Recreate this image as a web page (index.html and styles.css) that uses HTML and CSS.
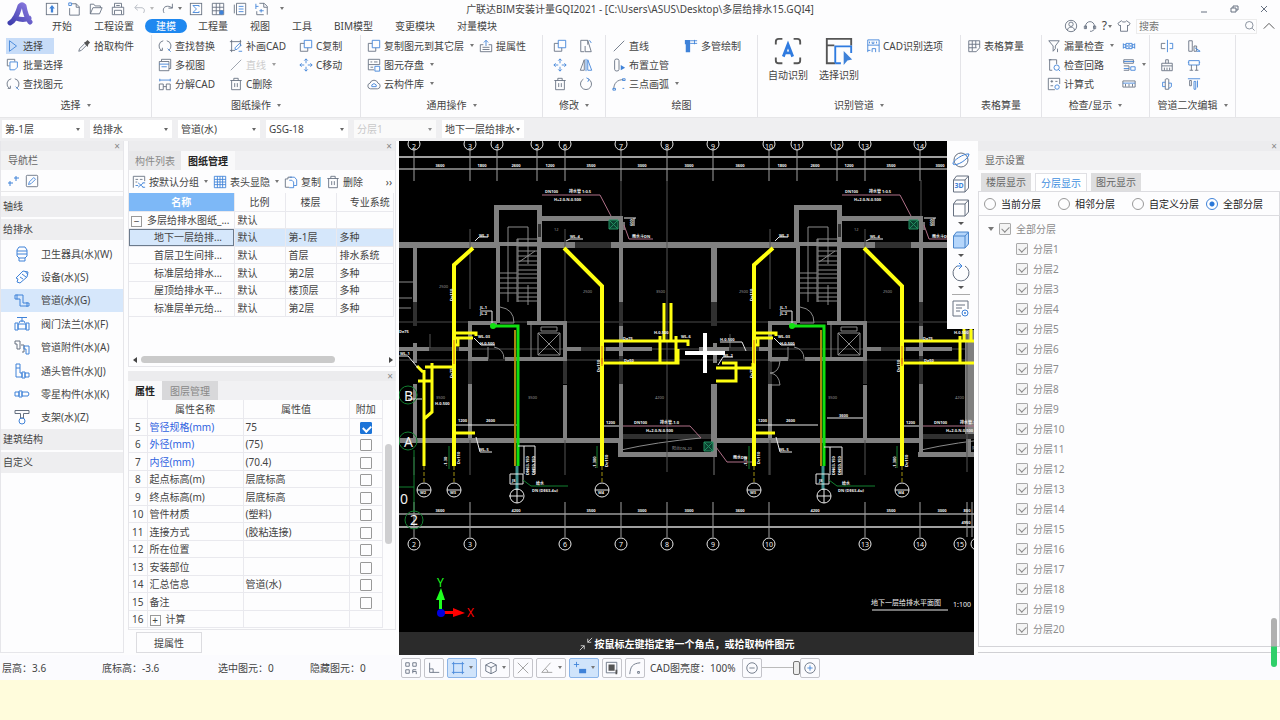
FILE: index.html
```
<!DOCTYPE html>
<html lang="zh-CN">
<head>
    <meta charset="UTF-8">
    <meta name="viewport" content="width=device-width, initial-scale=1.0">
    <title>广联达BIM安装计量GQI2021</title>
    <link rel="stylesheet" href="styles.css">
</head>
<body>
    <!-- 图标库 -->
    <svg class="defs" width="0" height="0" aria-hidden="true">
        <symbol id="i-up" viewBox="0 0 16 16"><rect x="1.5" y="1.5" width="13" height="13"/><path class="bf" d="M8 3.5l3.2 3.8H9.3V12H6.7V7.3H4.8z"/></symbol>
        <symbol id="i-new" viewBox="0 0 16 16"><path d="M5 2h5.500L14 5.500V15H3V7M10.500 2v4H14"/><path class="b" d="M2 1h3v3H2z"/></symbol>
        <symbol id="i-open" viewBox="0 0 16 16"><path d="M1.500 13.500v-11h4l1.500 2h6v2M1.500 13.500l3-7h10.500l-3 7z"/></symbol>
        <symbol id="i-save" viewBox="0 0 16 16"><path d="M4 6V1.500h8V6M1.500 6h13v8.500h-13zM4 14V9.500h8V14M6 4h4"/></symbol>
        <symbol id="i-undo" viewBox="0 0 16 16"><path d="M5 3L2 6.500l3.500 3M2.500 6.500H9c4 0 5 3 3 6"/></symbol>
        <symbol id="i-redo" viewBox="0 0 16 16"><path d="M3.500 12.500C1 8 4 4 9 5l4 1.500M13 2v5H8.500"/></symbol>
        <symbol id="i-sum" viewBox="0 0 16 16"><rect x="1.500" y="1.500" width="13" height="13"/><path class="b" d="M11.500 5.500V4h-7l4 4-4 4h7v-1.500"/></symbol>
        <symbol id="i-table" viewBox="0 0 16 16"><path d="M1.500 1.500h13v13h-13zM1.500 6h13M1.500 10h13M6 1.500v13M10 1.500v13"/><circle class="bf" cx="12" cy="12" r="2.500"/></symbol>
        <symbol id="i-list" viewBox="0 0 16 16"><path d="M4 1.500h10.500v13H4zM1.500 3v10"/><path class="b" d="M6.500 5h5.500M6.500 8h5.500M6.500 11h5.500"/></symbol>
        <symbol id="i-export" viewBox="0 0 16 16"><path d="M5 1.500h5.500L14 5v9.500M2 10.500v4h8M10 1.500V6h4"/><path class="b" d="M1 2v6M4 5H1M7 8v4M5 10h5"/></symbol>
        <symbol id="i-cursor" viewBox="0 0 16 16"><path class="b" d="M4 2v12l8-6z"/></symbol>
        <symbol id="i-pick" viewBox="0 0 16 16"><path d="M2 14l1-3 6-6 2 2-6 6z"/><path class="df" d="M8 4l2-1 2-2 3 3-2 2-1 3z"/></symbol>
        <symbol id="i-multi" viewBox="0 0 16 16"><path d="M4 9H1.500V1.500H10V4"/><path class="b" d="M4.500 4.500h8.500v6l-3 3H4.500z"/></symbol>
        <symbol id="i-find" viewBox="0 0 16 16"><path d="M6 2A6 6 0 0 0 4 13M10 2a6 6 0 0 1 2 11M2 13h3v-3"/><path class="b" d="M11 11l3.500 3.500"/></symbol>
        <symbol id="i-views" viewBox="0 0 16 16"><path d="M4 3.500V1.500h10.500V12h-2M1.500 4h11v10.500h-11z"/><path class="b" d="M1.500 7h11M4 10h6"/></symbol>
        <symbol id="i-split" viewBox="0 0 16 16"><path d="M1.500 8v6.500H6V8zM9.500 8v6.500H14V8zM6 11h3.500"/><path class="b" d="M2 2v3M14 2v3M2 3.500h12"/></symbol>
        <symbol id="i-draw" viewBox="0 0 16 16"><path d="M3 1v14M1 3h13M13 1v7M1 13h6"/><path class="b" d="M7 10l5-5 2 2-5 5H7zM11 14h4"/></symbol>
        <symbol id="i-line" viewBox="0 0 16 16"><path d="M2 14L14 2"/></symbol>
        <symbol id="i-trash" viewBox="0 0 16 16"><path d="M1.500 4h13M5.500 4V1.500h5V4M3 4v10.500h10V4M6.500 7v4.500M9.500 7v4.500"/></symbol>
        <symbol id="i-copy" viewBox="0 0 16 16"><path d="M6 5H1.500v9H10v-4"/><path class="b" d="M6 1.500h8.500V10H6z"/></symbol>
        <symbol id="i-move" viewBox="0 0 16 16"><path class="b" d="M8 1v5M8 10v5M1 8h5M10 8h5M6 3l2-2 2 2M6 13l2 2 2-2M3 6L1 8l2 2M13 6l2 2-2 2"/></symbol>
        <symbol id="i-disk" viewBox="0 0 16 16"><path d="M1.500 1.500h13v6h-13zM1.500 7.500v6H8M4 4.500h2M8 4.500h4M4 10.500h3"/><path class="b" d="M9 9.500h5.500V15H9z"/></symbol>
        <symbol id="i-cloud" viewBox="0 0 16 16"><path d="M4 13.500a3.300 3.300 0 0 1-.5-6.500A4.700 4.700 0 0 1 12.500 7a3.300 3.300 0 0 1-.5 6.500z"/><path class="b" d="M5.500 11V9l2.500-1.500L10.500 9v2z"/></symbol>
        <symbol id="i-prop" viewBox="0 0 16 16"><path d="M5 6.500H1.500v8h13v-8H11M4 9.500h8M4 12h8"/><path class="b" d="M8 8V1.500M5.500 4L8 1.500 10.500 4"/></symbol>
        <symbol id="i-stretch" viewBox="0 0 16 16"><path d="M6 14.500H2v-13h8v5M7 8v6.500h7L10 1.500"/><path class="b" d="M12 1.500l2 3"/></symbol>
        <symbol id="i-mirror" viewBox="0 0 16 16"><path d="M6 2v12H1.500z"/><path class="b" d="M10 2v12h4.500zM8 1v14"/></symbol>
        <symbol id="i-rotate" viewBox="0 0 16 16"><path d="M11 2.500A6.300 6.300 0 1 1 5 2.500"/><path class="b" d="M8.500 1l3 1.500-1.500 3"/></symbol>
        <symbol id="i-riser" viewBox="0 0 16 16"><path d="M3 3v10a2 1.500 0 0 0 5 0V3a2 1.500 0 0 0-5 0z"/><path class="bf" d="M10 8l5 3-5 3z"/></symbol>
        <symbol id="i-arc" viewBox="0 0 16 16"><path d="M2 14C2 7 6 3 13 3"/><path class="b" d="M1 13h3v2H1zM12 2h3v2h-3zM12 13h2"/></symbol>
        <symbol id="i-pipes" viewBox="0 0 16 16"><path class="bf" d="M1 1h6v14H2V6H1z"/><path class="b" d="M7 2h8M7 5h8M12 1v5"/></symbol>
        <symbol id="i-auto" viewBox="0 0 32 32"><path class="thick" d="M3 9V6q0-3 3-3h4M22 3h4q3 0 3 3v3M29 23v3q0 3-3 3h-4M10 29H6q-3 0-3-3v-3"/><path class="bthick" d="M11 22l5-13 5 13M13 18h6"/></symbol>
        <symbol id="i-choose" viewBox="0 0 32 32"><path class="thick" d="M12 29H3V3h26v7M3 10h8"/><path class="bline" d="M12 29V11h17v7M12 29h6"/><path class="bf" d="M21 16l9 9-5 1-4 5z"/></symbol>
        <symbol id="i-cad" viewBox="0 0 16 16"><path class="b" d="M2 15V1h13v14M2 7h13M4 3v2M7 3v2h2V3M12 3v2M7 15v-4h4v4M2 13h3"/></symbol>
        <symbol id="i-sheet" viewBox="0 0 16 16"><path d="M2 2h12.500v8l-4 4.500H2zM2 6h12.500M2 10h9M6 2v12M10 2v8"/></symbol>
        <symbol id="i-funnel" viewBox="0 0 16 16"><path d="M2 2h12L9.500 8v3L7 14V8zM12 11v4"/></symbol>
        <symbol id="i-loop" viewBox="0 0 16 16"><path d="M6 14H3V2h8v5M2 2h3"/><circle class="b" cx="11" cy="11" r="3"/><path class="b" d="M13 13l2 2"/></symbol>
        <symbol id="i-calc" viewBox="0 0 16 16"><path d="M9 14.500H1.500v-13h13V8M4 5h3M5.500 3.500v3M9.500 5H12M4 10h3"/><circle class="b" cx="11.500" cy="11.500" r="2.500"/></symbol>
        <symbol id="i-joint" viewBox="0 0 16 16"><path class="b" d="M1.500 5v6M14.500 5v6M1.500 6.500h3v3h-3M14.500 6.500h-3v3h3M4.500 5h7v6h-7z"/><circle class="b" cx="8" cy="8" r="1.500"/></symbol>
        <symbol id="i-layers" viewBox="0 0 16 16"><path d="M2 2h11v4H2zM2 9h6v5H2"/><path class="b" d="M2 4h12M10 10h5v4h-5zM2 12h6"/></symbol>
        <symbol id="i-ruler" viewBox="0 0 16 16"><path d="M1 4.500h14v7H1zM4 8v3M8 8v3M12 8v3"/><path class="b" d="M1 7h14"/></symbol>
        <symbol id="i-break" viewBox="0 0 16 16"><path d="M6 5H1.500v6H6"/><path class="b" d="M8.500 1v14M11 5h3.500v6H11"/></symbol>
        <symbol id="i-brush" viewBox="0 0 16 16"><path d="M6.500 6V2h3v4M2 9h12V6H2zM2 9v5.500h12V9M5 11v3M8 11v3M11 11v3"/></symbol>
        <symbol id="i-tee" viewBox="0 0 16 16"><path d="M6 3v11h4V3a2 1 0 0 0-4 0z"/><path class="b" d="M6 6H3v5h3M10 7h3v4l-3 2"/></symbol>
        <symbol id="i-elbow" viewBox="0 0 16 16"><path d="M2 2h4v12H2zM8 8h3v6H8z"/><path class="b" d="M9 10l6 4M11 14h4"/></symbol>
        <symbol id="i-cross" viewBox="0 0 16 16"><path class="b" d="M2 3h12v5H2zM1 5h1M14 5h1"/><path d="M5 8v6M11 8v6M3 14h4M9 14h4"/></symbol>
        <symbol id="i-align" viewBox="0 0 16 16"><path class="b" d="M1 2h14M8 5h2v9H8zM12 4v8"/><path d="M3 4h2v6H3z"/></symbol>
        <symbol id="i-user" viewBox="0 0 16 16"><circle cx="8" cy="8" r="6.500"/><circle cx="8" cy="6" r="2.500"/><path d="M4 13c0-5 8-5 8 0"/></symbol>
        <symbol id="i-head" viewBox="0 0 16 16"><path d="M3 11V8a5 5 0 0 1 10 0v3M1.500 8v3H4V8zM14.500 8v3H12V8zM13 12l-3 2H8"/></symbol>
        <symbol id="i-shirt" viewBox="0 0 16 16"><path d="M5 2l-4 3 2 3 1-1v7h8V7l1 1 2-3-4-3c-1 2-5 2-6 0z"/></symbol>
        <symbol id="i-search" viewBox="0 0 16 16"><circle cx="7" cy="7" r="5"/><path d="M11 11l3 3"/></symbol>
        <symbol id="i-basin" viewBox="0 0 16 16"><path class="b" d="M5 1h6l2 3v6l-2 2v3H5v-3l-2-2V4zM3 5h10M3 8h10M5 12h6"/></symbol>
        <symbol id="i-equip" viewBox="0 0 16 16"><path class="b" d="M2 9l7-7 5 1-1 5-7 6-3-1 1-3zM6 8l3 2M8 5l4 3M11 2l3 4"/></symbol>
        <symbol id="i-pipe" viewBox="0 0 16 16"><path class="b" d="M1 3v4h5v7h9v-3H9V3zM3 2.500v5M13 10v5"/></symbol>
        <symbol id="i-valve" viewBox="0 0 16 16"><path class="b" d="M3 1.500h10M8 1.500V6M5 7l1-2h4l1 2M1 7h3v7H1zM12 7h3v7h-3zM4 8h8v5H4z"/></symbol>
        <symbol id="i-fit" viewBox="0 0 16 16"><path d="M1 2h5v8H3V5H1zM7 6h3v7H8"/><path class="b" d="M10 7h5v8h-3v-5h-2z"/></symbol>
        <symbol id="i-conn" viewBox="0 0 16 16"><path class="b" d="M2 1h4v4H2zM2 5v9h6v-4H6V5M8 9h3v6H8zM11 10h4v4h-4z"/></symbol>
        <symbol id="i-part" viewBox="0 0 16 16"><path class="b" d="M1 6h4v4H1zM5 5h3v6H5zM8 6h6q2 2 0 4H8z"/></symbol>
        <symbol id="i-support" viewBox="0 0 16 16"><path d="M1 1.500h14v3H9.500V9h-3V4.500H1z"/><circle class="b" cx="8" cy="12" r="3"/></symbol>
        <symbol id="i-group" viewBox="0 0 16 16"><path d="M1.500 14.500v-13h13V7M4 5h3M9 5h3M4 8h2"/><path class="b" d="M7 9l6 5M13 9l-6 5M4 12h3M12 9h3M12 14h3"/></symbol>
        <symbol id="i-grid" viewBox="0 0 16 16"><path class="b" d="M1.500 1.500h13v13h-13zM1.500 5h13M1.500 8h13M1.500 11h13M5 1.500v13M8 1.500v13M11 1.500v13"/></symbol>
        <symbol id="i-paste" viewBox="0 0 16 16"><path d="M6 14H1.500V4.500h3M4.500 4.500v-2H9"/><path class="b" d="M6.500 2.500H12l2.500 3V12h-3M6 6h3l2 2v6.500H6"/></symbol>
        <symbol id="i-orbit" viewBox="0 0 20 20"><circle cx="10" cy="10" r="7"/><path class="b" d="M2 14C5 17 18 9 18 4M2 14C1 11 13 3 18 4"/></symbol>
        <symbol id="i-cube" viewBox="0 0 20 20"><path d="M2.500 6h11.500v12H2.500zM2.500 6l3-4h12v12l-3.500 4M14 6l3.500-4"/></symbol>
        <symbol id="i-cubef" viewBox="0 0 20 20"><path class="fillb" d="M2.500 6h11.500v12H2.500zM2.500 6l3-4h12v12l-3.500 4M14 6l3.500-4"/></symbol>
        <symbol id="i-turn" viewBox="0 0 20 20"><path d="M14 4A8 8 0 1 1 6 4"/><path class="b" d="M6 4h4M8 1l3 3-3 3"/></symbol>
        <symbol id="i-note" viewBox="0 0 20 20"><path d="M10 17H2V2h15v8M5 6h9M5 9h6M5 12h4"/><circle class="b" cx="14" cy="14" r="3"/><circle class="bf" cx="14" cy="14" r="1"/></symbol>
        <symbol id="i-quad" viewBox="0 0 16 16"><path d="M2 2h4v4H2zM10 2h4v4h-4zM2 10h4v4H2zM14 10h-4v4M10 12h4v3"/></symbol>
        <symbol id="i-ortho" viewBox="0 0 16 16"><path d="M3 2v11h11M3 9h4v4"/></symbol>
        <symbol id="i-box" viewBox="0 0 16 16"><path class="b" d="M3 3h10v10H3zM1 3h2V1M13 1v2h2M1 13h2v2M13 15v-2h2"/></symbol>
        <symbol id="i-hex" viewBox="0 0 16 16"><path d="M8 1.500l6 3v7l-6 3-6-3v-7zM2 4.500l6 3 6-3M8 7.500v7"/></symbol>
        <symbol id="i-x" viewBox="0 0 16 16"><path d="M2 2l12 12M14 2L2 14"/></symbol>
        <symbol id="i-angle" viewBox="0 0 16 16"><path d="M12 2L2 13h12M6 9q3 1 3 4"/></symbol>
        <symbol id="i-plus" viewBox="0 0 16 16"><path class="b" d="M4 1v6M1 4h6"/><path class="bf" d="M7 9h8v5H7z"/></symbol>
        <symbol id="i-snap" viewBox="0 0 16 16"><path d="M1.500 1.500h12v12h-12z"/><path class="df" d="M4 4h7v7H4zM12 10v5h2v-5z"/></symbol>
        <symbol id="i-curve" viewBox="0 0 16 16"><path d="M2 15C3 6 5 3 14 2M11 12h2v2h-2z"/></symbol>
        <symbol id="i-minus-c" viewBox="0 0 16 16"><circle cx="8" cy="8" r="6"/><path d="M5 8h6"/></symbol>
        <symbol id="i-plus-c" viewBox="0 0 16 16"><circle cx="8" cy="8" r="6"/><path class="b" d="M5 8h6M8 5v6"/></symbol>
        <symbol id="i-in" viewBox="0 0 16 16"><path d="M15 1L10 6M10 2v4h4M1 15l5-5M2 10h4v4"/></symbol>
    </svg>

    <header>
        <svg class="logo" viewBox="0 0 28 26" role="img" aria-label="logo">
            <defs><linearGradient id="lg" x1="0" y1="1" x2="1" y2="0"><stop offset="0" stop-color="#3f3fae"/><stop offset="1" stop-color="#8c7be0"/></linearGradient></defs>
            <path fill="none" stroke="url(#lg)" stroke-width="5" stroke-linecap="round" stroke-linejoin="round" d="M3 21C7 19 11 11 13 4q2-2 4 0c1 6 3 12 6 16M9 16c5 2 9 2 13 0"/>
        </svg>
        <div class="titlebar">
            <div class="quick">
                <button aria-label="上传"><svg class="ic"><use href="#i-up"/></svg></button>
                <button aria-label="新建"><svg class="ic"><use href="#i-new"/></svg></button>
                <button aria-label="打开"><svg class="ic"><use href="#i-open"/></svg></button>
                <button aria-label="保存"><svg class="ic"><use href="#i-save"/></svg></button>
                <button aria-label="撤销" class="caret off"><svg class="ic"><use href="#i-undo"/></svg></button>
                <button aria-label="恢复" class="caret"><svg class="ic"><use href="#i-redo"/></svg></button>
                <button aria-label="汇总"><svg class="ic"><use href="#i-sum"/></svg></button>
                <button aria-label="报表"><svg class="ic"><use href="#i-table"/></svg></button>
                <button aria-label="清单"><svg class="ic"><use href="#i-list"/></svg></button>
                <button aria-label="导出"><svg class="ic"><use href="#i-export"/></svg></button>
                <button aria-label="更多" class="caret"></button>
            </div>
            <h1>广联达BIM安装计量GQI2021 - [C:\Users\ASUS\Desktop\多层给排水15.GQI4]</h1>
            <div class="winbtns">
                <button aria-label="最小化"><svg viewBox="0 0 10 10"><path d="M2 8h6"/></svg></button>
                <button aria-label="还原"><svg viewBox="0 0 10 10"><path d="M2 4h5v4H2zM4 4V2h5v4H7"/></svg></button>
                <button aria-label="关闭"><svg viewBox="0 0 10 10"><path d="M2 2l6 6M8 2L2 8"/></svg></button>
            </div>
        </div>
        <div class="menubar">
            <nav>
                <a href="#">开始</a>
                <a href="#">工程设置</a>
                <a href="#" class="selected">建模</a>
                <a href="#">工程量</a>
                <a href="#">视图</a>
                <a href="#">工具</a>
                <a href="#">BIM模型</a>
                <a href="#">变更模块</a>
                <a href="#">对量模块</a>
            </nav>
            <div class="tools">
                <button aria-label="用户"><svg class="ic"><use href="#i-user"/></svg></button>
                <button aria-label="客服"><svg class="ic"><use href="#i-head"/></svg></button>
                <button class="caret help" aria-label="帮助">?</button>
                <button aria-label="皮肤"><svg class="ic"><use href="#i-shirt"/></svg></button>
                <div class="search">
                    <input type="text" placeholder="搜索" aria-label="搜索">
                    <svg class="ic"><use href="#i-search"/></svg>
                </div>
                <button aria-label="收起"><svg class="ic fold-up" viewBox="0 0 16 16"><path d="M2 11l6-6 6 6"/></svg></button>
            </div>
        </div>
    </header>

    <!-- 功能区 -->
    <div class="ribbon">
        <section class="g1">
            <div class="cmds">
                <button class="selected"><svg class="ic"><use href="#i-cursor"/></svg>选择</button>
                <button><svg class="ic"><use href="#i-pick"/></svg>拾取构件</button>
                <button><svg class="ic"><use href="#i-multi"/></svg>批量选择</button>
                <button class="row3"><svg class="ic"><use href="#i-find"/></svg>查找图元</button>
            </div>
            <h2 class="caret">选择</h2>
        </section>
        <section class="g2">
            <div class="cmds">
                <button><svg class="ic"><use href="#i-find"/></svg>查找替换</button>
                <button><svg class="ic"><use href="#i-draw"/></svg>补画CAD</button>
                <button><svg class="ic"><use href="#i-copy"/></svg>C复制</button>
                <button><svg class="ic"><use href="#i-views"/></svg>多视图</button>
                <button class="caret off"><svg class="ic"><use href="#i-line"/></svg>直线</button>
                <button><svg class="ic"><use href="#i-move"/></svg>C移动</button>
                <button><svg class="ic"><use href="#i-split"/></svg>分解CAD</button>
                <button><svg class="ic"><use href="#i-trash"/></svg>C删除</button>
            </div>
            <h2 class="caret">图纸操作</h2>
        </section>
        <section class="g3">
            <div class="cmds">
                <button class="caret"><svg class="ic"><use href="#i-copy"/></svg>复制图元到其它层</button>
                <button><svg class="ic"><use href="#i-prop"/></svg>提属性</button>
                <button class="caret"><svg class="ic"><use href="#i-disk"/></svg>图元存盘</button>
                <button class="caret row3"><svg class="ic"><use href="#i-cloud"/></svg>云构件库</button>
            </div>
            <h2 class="caret">通用操作</h2>
        </section>
        <section class="g4">
            <div class="cmds">
                <button aria-label="复制"><svg class="ic"><use href="#i-copy"/></svg></button>
                <button aria-label="拉伸"><svg class="ic"><use href="#i-stretch"/></svg></button>
                <button aria-label="移动"><svg class="ic"><use href="#i-move"/></svg></button>
                <button aria-label="镜像"><svg class="ic"><use href="#i-mirror"/></svg></button>
                <button aria-label="删除"><svg class="ic"><use href="#i-trash"/></svg></button>
                <button aria-label="旋转"><svg class="ic"><use href="#i-rotate"/></svg></button>
            </div>
            <h2 class="caret">修改</h2>
        </section>
        <section class="g5">
            <div class="cmds">
                <button><svg class="ic"><use href="#i-line"/></svg>直线</button>
                <button><svg class="ic"><use href="#i-pipes"/></svg>多管绘制</button>
                <button><svg class="ic"><use href="#i-riser"/></svg>布置立管</button>
                <button class="caret row3"><svg class="ic"><use href="#i-arc"/></svg>三点画弧</button>
            </div>
            <h2>绘图</h2>
        </section>
        <section class="g6">
            <div class="cmds">
                <button class="big"><svg><use href="#i-auto"/></svg>自动识别</button>
                <button class="big"><svg><use href="#i-choose"/></svg>选择识别</button>
                <button><svg class="ic"><use href="#i-cad"/></svg>CAD识别选项</button>
            </div>
            <h2 class="caret">识别管道</h2>
        </section>
        <section class="g7">
            <div class="cmds">
                <button><svg class="ic"><use href="#i-sheet"/></svg>表格算量</button>
            </div>
            <h2>表格算量</h2>
        </section>
        <section class="g8">
            <div class="cmds">
                <button class="caret"><svg class="ic"><use href="#i-funnel"/></svg>漏量检查</button>
                <button aria-label="接头"><svg class="ic"><use href="#i-joint"/></svg></button>
                <button><svg class="ic"><use href="#i-loop"/></svg>检查回路</button>
                <button class="caret" aria-label="图层"><svg class="ic"><use href="#i-layers"/></svg></button>
                <button><svg class="ic"><use href="#i-calc"/></svg>计算式</button>
                <button aria-label="标尺"><svg class="ic"><use href="#i-ruler"/></svg></button>
            </div>
            <h2 class="caret">检查/显示</h2>
        </section>
        <section class="g9">
            <div class="cmds">
                <button aria-label="打断"><svg class="ic"><use href="#i-break"/></svg></button>
                <button aria-label="弯头"><svg class="ic"><use href="#i-elbow"/></svg></button>
                <button aria-label="格式刷"><svg class="ic"><use href="#i-brush"/></svg></button>
                <button aria-label="跨越"><svg class="ic"><use href="#i-cross"/></svg></button>
                <button aria-label="三通"><svg class="ic"><use href="#i-tee"/></svg></button>
                <button aria-label="对齐"><svg class="ic"><use href="#i-align"/></svg></button>
            </div>
            <h2 class="caret">管道二次编辑</h2>
        </section>
    </div>

    <div class="pickers">
        <label><select aria-label="楼层"><option>第-1层</option></select></label>
        <label><select aria-label="专业"><option>给排水</option></select></label>
        <label><select aria-label="构件类型"><option>管道(水)</option></select></label>
        <label><select aria-label="构件"><option>GSG-18</option></select></label>
        <label class="off"><select aria-label="分层" disabled><option>分层1</option></select></label>
        <label><select aria-label="图纸"><option>地下一层给排水</option></select></label>
    </div>

    <main>
        <aside class="sidenav">
            <div class="strip"><button aria-label="关闭">×</button></div>
            <h3>导航栏</h3>
            <div class="navtools">
                <button aria-label="添加"><svg class="ic"><path class="b" d="M4 7v5M2 9h5M10 2v5M8 4h5"/></svg></button>
                <button aria-label="编辑"><svg class="ic" viewBox="0 0 16 16"><rect x="1.500" y="1.500" width="13" height="13" rx="1"/><path class="b" d="M4 12l1-3 5-5 2 2-5 5z"/></svg></button>
            </div>
            <h4>轴线</h4>
            <h4>给排水</h4>
            <ul>
                <li><a href="#"><svg><use href="#i-basin"/></svg>卫生器具(水)(W)</a></li>
                <li><a href="#"><svg><use href="#i-equip"/></svg>设备(水)(S)</a></li>
                <li class="selected"><a href="#"><svg><use href="#i-pipe"/></svg>管道(水)(G)</a></li>
                <li><a href="#"><svg><use href="#i-valve"/></svg>阀门法兰(水)(F)</a></li>
                <li><a href="#"><svg><use href="#i-fit"/></svg>管道附件(水)(A)</a></li>
                <li><a href="#"><svg><use href="#i-conn"/></svg>通头管件(水)(J)</a></li>
                <li><a href="#"><svg><use href="#i-part"/></svg>零星构件(水)(K)</a></li>
                <li><a href="#"><svg><use href="#i-support"/></svg>支架(水)(Z)</a></li>
            </ul>
            <h4>建筑结构</h4>
            <h4>自定义</h4>
        </aside>

        <div class="middle">
            <section class="drawings">
                <div class="strip"><button aria-label="关闭">×</button></div>
                <div class="tabs"><button>构件列表</button><button class="selected">图纸管理</button></div>
                <div class="bar">
                    <button class="caret"><svg class="ic"><use href="#i-group"/></svg>按默认分组</button>
                    <button class="caret"><svg class="ic"><use href="#i-grid"/></svg>表头显隐</button>
                    <button><svg class="ic"><use href="#i-paste"/></svg>复制</button>
                    <button><svg class="ic"><use href="#i-trash"/></svg>删除</button>
                    <button class="more" aria-label="更多">››</button>
                </div>
                <table class="sheets">
                    <colgroup><col class="c1"><col class="c2"><col class="c3"><col></colgroup>
                    <thead><tr><th class="selected">名称</th><th>比例</th><th>楼层</th><th>专业系统</th></tr></thead>
                    <tbody>
                        <tr class="root"><td><button class="fold" aria-label="折叠">−</button>多层给排水图纸_...</td><td>默认</td><td></td><td></td></tr>
                        <tr class="selected"><td>地下一层给排...</td><td>默认</td><td>第-1层</td><td>多种</td></tr>
                        <tr><td>首层卫生间排...</td><td>默认</td><td>首层</td><td>排水系统</td></tr>
                        <tr><td>标准层给排水...</td><td>默认</td><td>第2层</td><td>多种</td></tr>
                        <tr><td>屋顶给排水平...</td><td>默认</td><td>楼顶层</td><td>多种</td></tr>
                        <tr><td>标准层单元给...</td><td>默认</td><td>第2层</td><td>多种</td></tr>
                    </tbody>
                </table>
                <div class="hscroll"><i></i><span></span><i></i></div>
            </section>

            <section class="props">
                <div class="strip"><button aria-label="关闭">×</button></div>
                <div class="tabs"><button class="selected">属性</button><button class="dark">图层管理</button></div>
                <div class="proplist">
                    <table>
                        <colgroup><col class="c1"><col class="c2"><col class="c3"><col></colgroup>
                        <thead><tr><th></th><th>属性名称</th><th>属性值</th><th>附加</th></tr></thead>
                        <tbody>
                            <tr class="key"><td>5</td><td>管径规格(mm)</td><td>75</td><td><input type="checkbox" aria-label="管径规格" checked></td></tr>
                            <tr class="key"><td>6</td><td>外径(mm)</td><td>(75)</td><td><input type="checkbox" aria-label="外径"></td></tr>
                            <tr class="key"><td>7</td><td>内径(mm)</td><td>(70.4)</td><td><input type="checkbox" aria-label="内径"></td></tr>
                            <tr><td>8</td><td>起点标高(m)</td><td>层底标高</td><td><input type="checkbox" aria-label="起点标高"></td></tr>
                            <tr><td>9</td><td>终点标高(m)</td><td>层底标高</td><td><input type="checkbox" aria-label="终点标高"></td></tr>
                            <tr><td>10</td><td>管件材质</td><td>(塑料)</td><td><input type="checkbox" aria-label="管件材质"></td></tr>
                            <tr><td>11</td><td>连接方式</td><td>(胶粘连接)</td><td><input type="checkbox" aria-label="连接方式"></td></tr>
                            <tr><td>12</td><td>所在位置</td><td></td><td><input type="checkbox" aria-label="所在位置"></td></tr>
                            <tr><td>13</td><td>安装部位</td><td></td><td><input type="checkbox" aria-label="安装部位"></td></tr>
                            <tr><td>14</td><td>汇总信息</td><td>管道(水)</td><td><input type="checkbox" aria-label="汇总信息"></td></tr>
                            <tr><td>15</td><td>备注</td><td></td><td><input type="checkbox" aria-label="备注"></td></tr>
                            <tr><td>16</td><td><button class="fold" aria-label="展开">+</button>计算</td><td></td><td></td></tr>
                        </tbody>
                    </table>
                    <div class="vscroll"><span></span></div>
                </div>
                <button class="extract">提属性</button>
            </section>
        </div>

        <div class="canvas">
            <svg class="cad" viewBox="399 141 575 491" preserveAspectRatio="xMinYMin slice">
                <defs>
                    <!-- 一个单元，右侧单元平移300 -->
                    <g id="unit">
                        <g class="wall">
                            <path d="M494 205h48v41h-48zM499 210v32h38v-32z" fill-rule="evenodd"/>
                            <path d="M496 246h4v77h-4zM537 246h4v76h-4zM542 216h81v27h-4v-22h-77z"/>
                            <path d="M413 247h4v74h-4zM413 343h4v20h-4zM413 384h4v56h-4zM563 321h4v36h-4zM563 385h4v53h-4zM619 247h4v55h-4zM619 326h4v30h-4zM619 384h4v72h-4zM711 247h4v55h-4zM711 384h4v70h-4z"/>
                            <path d="M469 321h28v4h-28zM527 321h40v4h-40zM468 321h4v40h-4zM468 384h4v56h-4zM468 357h20v4h-20zM505 357h62v4h-62z"/>
                            <path d="M399 347h30v4h-30zM459 347h10v4h-10zM567 347h14v4h-14zM606 347h46v4h-46zM618 452h99v5h-99zM713 438h4v18h-4z"/>
                        </g>
                        <g class="dark"><path d="M429 347h30v4h-30zM581 347h25v4h-25zM575 242h36v6h-36zM538 224h3v13h-3zM468 361h4v23h-4zM563 361h4v23h-4zM619 302h4v24h-4zM619 356h4v28h-4zM413 302h4v24h-4zM711 302h4v24h-4zM623 434h88v5h-88z"/></g>
                        <g class="thin">
                            <path d="M508 302v-75h20v37M517 239v63M518 239v63M517 239h20M518 246h19M518 251h19M518 256h19M518 261h19M518 265h19M518 270h19M518 274h19M518 278h19M518 283h19M518 288h19M518 293h19M518 297h19M518 301h19M500 273h17M500 278h17M500 283h17M500 288h17M500 293h17M519 262l16-11"/>
                            <path d="M528 285v20M538 333h22v22h-22zM538 333l22 22M560 333l-22 22M541 327h16v4h-16zM500 307q14 2 14 16h-14M531 321v36M488 347v12M494 347q10 2 10 12M621 450q35-8 80-12"/>
                        </g>
                        <g class="dash"><path d="M470 229v80M565 229v92M470 440v35M565 440v35M667 180v292M414 457v18M621 180v36M430 334v14"/></g>
                        <!-- 立管 -->
                        <g class="pipe">
                            <path d="M454 466V265l19-17M602 466V286L564 248" stroke-width="4"/>
                            <path d="M454 333h22v3M456 338h17M455 433h20M458 337v8h-5" stroke-width="3"/>
                            <path d="M602 341h86v5M602 363h76v-14M660 336v26M664 303v38M671 303v38M676 336v26" stroke-width="3"/>
                        </g>
                        <path class="red" d="M454 340v24M602 346v18M602 358v8"/>
                        <path class="olive" d="M454 466v18M602 466v18"/>
                        <path class="green1" d="M449 446v23M597 446v22"/>
                        <g class="white">
                            <circle cx="454" cy="490" r="7"/><circle cx="602" cy="490" r="7"/>
                            <path d="M447 490h14M595 490h14M475 241l4-4h9M566 241l4-2h13M480 311h12v12M474 338l7 7h14M476 437l4 15h12M456 425h62M604 426h15M624 222v8M624 218h12M634 218v8"/>
                        </g>
                        <path class="pink" d="M542 195h58l11 21M624 225l5 14h24"/>
                        <path class="pink" d="M623 426h67l11 12M716 447l11 15h26"/>
                        <g class="sq"><path d="M609 220h9v9h-9zM704 442h9v9h-9z"/><path d="M609 220l9 9M618 220l-9 9M704 442l9 9M713 442l-9 9"/></g>
                        <g class="tiny">
                            <text x="545" y="193">DN100</text><text x="569" y="193">排水管 1:0.5</text><text x="554" y="201">H+2.0-N-0.500</text>
                            <text x="479" y="237">WL-3</text><text x="570" y="238">WL-4</text><text x="632" y="238">雨水斗DN</text>
                            <text x="480" y="309">JL-1</text><text x="480" y="315">JL-2</text><text x="478" y="338">WL-03</text><text x="480" y="345">H-0.500</text>
                            <text x="458" y="422">1200</text><text x="486" y="422">2600</text><text x="606" y="424">1200</text><text x="634" y="424">DN100</text><text x="660" y="424">排水管-1.0</text><text x="646" y="432">H+2.0-N-0.500</text>
                            <text x="479" y="451">WL-5</text><text x="733" y="459">雨水DN</text><text x="654" y="334">H-0.500</text><text x="681" y="338">WL-6</text><text x="623" y="340">De75</text><text x="624" y="362">De50</text>
                            <text x="450" y="494">W3</text><text x="598" y="494">W4</text>
                        </g>
                        <g class="dim"><text x="583" y="293">2500</text><text x="656" y="293">3500</text><text x="528" y="399">3500</text><text x="655" y="399">4200</text><text x="554" y="231">12</text><text x="672" y="450">阳台DN-20</text></g>
                        <g class="tiny" transform="rotate(-90)"><text x="-301" y="453">De110</text><text x="-378" y="453">De75</text><text x="-466" y="447">-1.30</text><text x="-464" y="460">De110</text><text x="-372" y="600">De110</text><text x="-468" y="596">-1.300</text><text x="-467" y="608">De110</text><text x="-226" y="633">600</text></g>
                    </g>
                </defs>
                <!-- 轴网 -->
                <path class="axis" d="M399 157h575M399 527h575" stroke-width="2"/>
                <path class="white" d="M399 169h575M399 514h575"/>
                <path class="axis" d="M414 149v32M470 149v32M497 149v32M537 149v32M565 149v32M621 149v32M667 149v32M713 149v32M769 149v32M797 149v32M837 149v32M865 149v32M920 149v32M414 502v35M470 502v35M565 502v35M621 502v35M667 502v35M713 502v35M769 502v35M865 502v35M920 502v35M967 502v35M972 502v35"/>
                <path class="grid" d="M399 322h575M399 360h575M399 349h575M714 440v35M769 440v35"/>
                <g class="white">
                    <circle cx="414" cy="144" r="6"/><circle cx="470" cy="144" r="6"/><circle cx="497" cy="144" r="6"/><circle cx="537" cy="144" r="6"/><circle cx="565" cy="144" r="6"/><circle cx="621" cy="144" r="6"/><circle cx="667" cy="144" r="6"/><circle cx="713" cy="144" r="6"/><circle cx="769" cy="144" r="6"/><circle cx="797" cy="144" r="6"/><circle cx="837" cy="144" r="6"/><circle cx="865" cy="144" r="6"/><circle cx="920" cy="144" r="6"/>
                    <circle cx="414" cy="544" r="6"/><circle cx="470" cy="544" r="6"/><circle cx="565" cy="544" r="6"/><circle cx="621" cy="544" r="6"/><circle cx="667" cy="544" r="6"/><circle cx="713" cy="544" r="6"/><circle cx="769" cy="544" r="6"/><circle cx="865" cy="544" r="6"/><circle cx="920" cy="544" r="6"/><circle cx="960" cy="544" r="6"/><circle cx="977" cy="544" r="6"/>
                </g>
                <g class="num">
                    <text x="414" y="149">2</text><text x="470" y="149">3</text><text x="497" y="149">4</text><text x="537" y="149">5</text><text x="565" y="149">6</text><text x="621" y="149">7</text><text x="667" y="149">8</text><text x="713" y="149">9</text><text x="769" y="149">10</text><text x="797" y="149">11</text><text x="837" y="149">12</text><text x="865" y="149">13</text><text x="920" y="149">14</text>
                    <text x="414" y="547">2</text><text x="470" y="547">3</text><text x="565" y="547">6</text><text x="621" y="547">7</text><text x="667" y="547">8</text><text x="713" y="547">9</text><text x="769" y="547">10</text><text x="865" y="547">13</text><text x="920" y="547">14</text><text x="960" y="547">15</text>
                </g>
                <g class="tiny mid">
                    <text x="440" y="167">3600</text><text x="482" y="167">1800</text><text x="516" y="167">2600</text><text x="550" y="167">1200</text><text x="591" y="167">3500</text><text x="642" y="167">3000</text><text x="689" y="167">3000</text><text x="740" y="167">3600</text><text x="782" y="167">1800</text><text x="815" y="167">2600</text><text x="849" y="167">1200</text><text x="891" y="167">3500</text><text x="940" y="167">3000</text>
                    <text x="440" y="512">3600</text><text x="516" y="512">4200</text><text x="591" y="512">3500</text><text x="642" y="512">3000</text><text x="689" y="512">3000</text><text x="740" y="512">3600</text><text x="815" y="512">4200</text><text x="891" y="512">3500</text><text x="942" y="512">3000</text><text x="967" y="512">800</text><text x="966" y="524">4950</text>
                </g>
                <!-- 外墙 -->
                <g class="wall"><path d="M399 242h97v6h-97zM541 242h34v6h-34zM611 242h185v6H611zM841 242h34v6h-34zM911 242h63v6h-63z"/><path d="M399 438h224v5H399zM713 438h210v5H713zM618 438h5v14h-5zM965 330h9v108h-9zM966 438h5v18h-5z"/></g>
                <use href="#unit"/>
                <use href="#unit" x="300"/>
                <!-- 给水管 -->
                <path class="gold" d="M515 330v136M821 330v136"/>
                <path class="green" d="M492 326h26v140M791 326h33v140"/>
                <circle class="gdot" cx="493" cy="326" r="3"/><circle class="gdot" cx="792" cy="326" r="3"/>
                <path class="teal" d="M517 466v24M823 466v24"/>
                <g class="white"><path d="M510 474h13v10h-13zM816 474h13v10h-13zM518 446h17M524 446v28M535 446v28M824 447h18M830 447v28M842 447v28M827 418h36M509 496h14M817 496h14M517 489v14M824 489v14"/><circle cx="517" cy="496" r="7"/><circle cx="824" cy="496" r="7"/></g>
                <path class="green1" d="M523 480l8 6h37M829 480l8 6h38"/>
                <g class="tiny"><text x="536" y="485">给水</text><text x="532" y="492">DN (DE63-4u)</text><text x="842" y="485">给水</text><text x="838" y="492">DN (DE63-4u)</text><text x="512" y="482">JS</text><text x="819" y="482">JS</text><text x="839" y="417">3600</text></g>
                <g class="tiny" transform="rotate(-90)"><text x="-475" y="529">DN63-150</text><text x="-475" y="535">DN50-150</text><text x="-475" y="835">DN63-150</text><text x="-475" y="841">DN50-150</text></g>
                <!-- 左侧及中部支管 -->
                <g class="pipe" stroke-width="3"><path d="M424 466v-96M432 363v49l-8 7M425 367h28M418 381h15M417 366l6 6M716 368h37v-5M736 368v13h-20M722 363h14v6"/></g>
                <path class="olive" d="M424 466v18"/><g class="white"><circle cx="424" cy="490" r="7"/><path d="M417 490h14M399 356h9l10 12M720 342h22l4 9M718 365l5-8h10M408 399h14"/></g>
                <g class="thin"><path d="M399 282h14M399 298h13M399 308h12M770 361h10q-1 12-10 12q9 1 10 12h-10"/></g>
                <g class="tiny"><text x="400" y="355">WL-1</text><text x="720" y="341">H-0.500</text><text x="435" y="405">H-0.500</text><text x="399" y="333">De75</text><text x="723" y="357">WL-2</text><text x="420" y="494">W2</text></g>
                <g class="dim"><text x="436" y="399">3500</text><text x="439" y="288">2500</text><text x="739" y="293">2500</text></g>
                <path class="green1" d="M414 450v62M399 487h15"/>
                <g class="green1"><circle cx="408" cy="395" r="9"/><circle cx="408" cy="441" r="9"/><circle cx="414" cy="520" r="9"/></g>
                <g class="mark"><text x="404" y="401">B</text><text x="404" y="447">A</text><text x="400" y="504">0</text><text x="410" y="525">2</text></g>
                <path class="cross" d="M705 333v40M685 353h40"/>
                <!-- 坐标轴 -->
                <path fill="#1eff1e" stroke="none" d="M436 600l5-12 4 12h-3v9h-3v-9z"/><path fill="#f00" stroke="none" d="M444 611h9v-3l12 5-12 4v-3h-9z"/><circle cx="441" cy="613" r="4" fill="#0000e0" stroke="none"/>
                <text class="axy y" x="437" y="587">Y</text><text class="axy x" x="467" y="617">X</text>
                <text class="caption" x="871" y="605">地下一层给排水平面图</text><path class="white" d="M872 610h76"/><text class="scale" x="953" y="607">1:100</text>
            </svg>
            <div class="hint"><svg class="ic"><use href="#i-in"/></svg>按鼠标左键指定第一个角点，或拾取构件图元</div>
            <div class="viewbar">
                <button aria-label="动态观察"><svg><use href="#i-orbit"/></svg></button>
                <button aria-label="三维" class="d3"><svg><use href="#i-cube"/></svg><span>3D</span></button>
                <button aria-label="视图" class="drop"><svg><use href="#i-cube"/></svg></button>
                <button aria-label="着色" class="drop"><svg><use href="#i-cubef"/></svg></button>
                <button aria-label="旋转" class="drop"><svg><use href="#i-turn"/></svg></button>
                <hr>
                <button aria-label="设置"><svg><use href="#i-note"/></svg></button>
            </div>
        </div>

        <aside class="display">
            <div class="strip"><button aria-label="关闭">×</button></div>
            <h3>显示设置</h3>
            <div class="tabs"><button>楼层显示</button><button class="selected">分层显示</button><button>图元显示</button></div>
            <div class="radios">
                <label><input type="radio" name="layer">当前分层</label>
                <label><input type="radio" name="layer">相邻分层</label>
                <label><input type="radio" name="layer">自定义分层</label>
                <label><input type="radio" name="layer" checked>全部分层</label>
            </div>
            <div class="tree">
                <label class="top"><input type="checkbox" checked disabled>全部分层</label>
                <ul>
                    <li><label><input type="checkbox" checked disabled>分层1</label></li>
                    <li><label><input type="checkbox" checked disabled>分层2</label></li>
                    <li><label><input type="checkbox" checked disabled>分层3</label></li>
                    <li><label><input type="checkbox" checked disabled>分层4</label></li>
                    <li><label><input type="checkbox" checked disabled>分层5</label></li>
                    <li><label><input type="checkbox" checked disabled>分层6</label></li>
                    <li><label><input type="checkbox" checked disabled>分层7</label></li>
                    <li><label><input type="checkbox" checked disabled>分层8</label></li>
                    <li><label><input type="checkbox" checked disabled>分层9</label></li>
                    <li><label><input type="checkbox" checked disabled>分层10</label></li>
                    <li><label><input type="checkbox" checked disabled>分层11</label></li>
                    <li><label><input type="checkbox" checked disabled>分层12</label></li>
                    <li><label><input type="checkbox" checked disabled>分层13</label></li>
                    <li><label><input type="checkbox" checked disabled>分层14</label></li>
                    <li><label><input type="checkbox" checked disabled>分层15</label></li>
                    <li><label><input type="checkbox" checked disabled>分层16</label></li>
                    <li><label><input type="checkbox" checked disabled>分层17</label></li>
                    <li><label><input type="checkbox" checked disabled>分层18</label></li>
                    <li><label><input type="checkbox" checked disabled>分层19</label></li>
                    <li><label><input type="checkbox" checked disabled>分层20</label></li>
                </ul>
            </div>
            <div class="thumb"></div>
        </aside>
    </main>

    <footer>
        <div class="info"><span>层高：3.6</span><span>底标高：-3.6</span><span>选中图元：0</span><span>隐藏图元：0</span></div>
        <div class="status">
            <button aria-label="捕捉"><svg class="ic"><use href="#i-quad"/></svg></button>
            <button aria-label="正交"><svg class="ic"><use href="#i-ortho"/></svg></button>
            <button aria-label="框选" class="caret on"><svg class="ic"><use href="#i-box"/></svg></button>
            <button aria-label="三维" class="caret"><svg class="ic"><use href="#i-hex"/></svg></button>
            <button aria-label="交点" class="dim-ic"><svg class="ic"><use href="#i-x"/></svg></button>
            <button aria-label="角度" class="caret dim-ic"><svg class="ic"><use href="#i-angle"/></svg></button>
            <button aria-label="偏移" class="caret on"><svg class="ic"><use href="#i-plus"/></svg></button>
            <button aria-label="选择"><svg class="ic"><use href="#i-snap"/></svg></button>
            <button aria-label="弧线"><svg class="ic"><use href="#i-curve"/></svg></button>
            <span>CAD图亮度：100%</span>
            <div class="bright">
                <button aria-label="减小"><svg class="ic"><use href="#i-minus-c"/></svg></button>
                <input type="range" min="0" max="100" value="100" aria-label="CAD图亮度">
                <button aria-label="增大"><svg class="ic"><use href="#i-plus-c"/></svg></button>
            </div>
        </div>
    </footer>
    <div class="bottom"></div>
</body>
</html>
```
FILE: styles.css
```
*{
    margin: 0;
    padding: 0;
    box-sizing: border-box;
}
body{
    display: flex;
    flex-direction: column;
    min-height: 100vh;
    background: #fdfdfe;
    color: #444;
    font: 10px/14px "Noto Sans", "Noto Sans CJK SC", sans-serif;
}
button, input, select{
    font: inherit;
    color: inherit;
    background: none;
    border: 0;
}
button{
    display: inline-flex;
    align-items: center;
    white-space: nowrap;
}
a{
    color: inherit;
    text-decoration: none;
}
ul{
    list-style: none;
}
h1, h2, h3, h4{
    font-size: 10px;
    font-weight: normal;
}
.defs{
    position: absolute;
}

/* 图标 */
svg{
    fill: none;
    stroke: #667080;
    stroke-width: 1;
}
.ic{
    width: 14px;
    height: 14px;
    flex: none;
}
.b{ stroke: #3f82d8; }
.bf{ fill: #3f82d8; stroke: none; }
.df{ fill: #555; stroke: none; }
.thick{ stroke: #555; stroke-width: 2; }
.bthick{ stroke: #2f7be0; stroke-width: 3; }
.bline{ stroke: #2f7be0; stroke-width: 2; }
.fillb{ fill: #b5d6fb; stroke: #4b86cc; }
.caret::after{
    content: "";
    flex: none;
    margin-left: 6px;
    border: 2px solid transparent;
    border-top: 3px solid #777;
    border-bottom: 0;
}
.off{
    color: #b8b8b8;
    opacity: 0.7;
}

/* 标题栏 */
header{
    position: relative;
}
.logo{
    position: absolute;
    left: 7px;
    top: 2px;
    width: 28px;
    height: 26px;
}
.titlebar{
    display: grid;
    grid-template-columns: 1fr auto 1fr;
    align-items: center;
    height: 17px;
}
.quick{
    display: flex;
    gap: 8px;
    padding-left: 45px;
}
.quick .caret{
    margin-right: -1px;
}
.quick .off{
    opacity: 0.5;
}
.quick .caret::after{
    margin-left: 3px;
}
.winbtns{
    display: flex;
    justify-content: flex-end;
    gap: 20px;
    padding-right: 11px;
}
.winbtns svg{
    width: 10px;
    height: 10px;
}
.menubar{
    display: flex;
    justify-content: space-between;
    align-items: center;
    height: 18px;
}
.menubar nav{
    display: flex;
    gap: 22px;
    padding-left: 52px;
}
.menubar .selected{
    margin: 0 -11px;
    padding: 0 11px;
    border-radius: 8px;
    background: #1e88f0;
    color: #fff;
}
.tools{
    display: flex;
    align-items: center;
    gap: 5px;
    padding-right: 4px;
}
.help{
    font-size: 12px;
}
.help::after{
    margin-left: 1px;
}
.search{
    display: flex;
    align-items: center;
    width: 121px;
    height: 15px;
    border: 1px solid #ececec;
}
.search input{
    flex: 1;
    min-width: 0;
    padding-left: 2px;
}
.search .ic{
    width: 12px;
}
.fold-up{
    stroke: #444;
}

/* 功能区 */
.ribbon{
    display: flex;
    height: 83px;
    border-bottom: 1px solid #e6e6e8;
}
.ribbon section{
    display: flex;
    flex-direction: column;
    border-right: 1px solid #e4e4e8;
}
.cmds{
    display: grid;
    grid-template-rows: repeat(3, 19px);
    align-items: center;
    justify-items: start;
    padding: 1px 0 0 6px;
}
.cmds button{
    gap: 3px;
    height: 16px;
}
.cmds .caret::after{
    margin-left: 3px;
}
.ribbon h2{
    flex: 1;
    display: flex;
    align-items: center;
    justify-content: center;
}
.cmds .selected{
    width: 48px;
    background: #c7dcf8;
}
.row3{
    grid-row: 3;
}
.g1{ width: 152px; }
.g2{ width: 209px; }
.g3{ width: 182px; }
.g4{ width: 63px; }
.g5{ width: 152px; }
.g6{ width: 203px; }
.g7{ width: 81px; }
.g8{ width: 108px; }
.g9{ width: 86px; }
.g1 .cmds{ grid-template-columns: 71px 1fr; }
.g2 .cmds{ grid-template-columns: 71px 70px 1fr; }
.g3 .cmds{ grid-template-columns: 112px 1fr; }
.g4 .cmds{ grid-template-columns: 26px 1fr; padding-left: 10px; }
.g5 .cmds{ grid-template-columns: 72px 1fr; }
.g6 .cmds{ grid-template-columns: 51px 47px 1fr; padding-left: 10px; }
.g8 .cmds{ grid-template-columns: 75px 1fr; padding-left: 5px; }
.g9 .cmds{ grid-template-columns: 27px 1fr; padding-left: 10px; }
.cmds .big{
    flex-direction: column;
    grid-row: 1 / 4;
    align-self: start;
    height: 48px;
    gap: 2px;
}
.big svg{
    width: 30px;
    height: 30px;
}

/* 楼层、构件选择 */
.pickers{
    display: flex;
    gap: 6px;
    height: 23px;
    padding: 2px;
    background: #efeff1;
}
.pickers label{
    position: relative;
    width: 82px;
    height: 18px;
    background: #fff;
}
.pickers select{
    width: 100%;
    height: 18px;
    padding-left: 3px;
    appearance: none;
    opacity: 1;
}
.pickers label::after{
    content: "";
    position: absolute;
    right: 4px;
    top: 8px;
    border: 2px solid transparent;
    border-top: 3px solid #666;
    border-bottom: 0;
}

/* 主区域 */
main{
    flex: 1;
    display: grid;
    grid-template-columns: 124px 268px minmax(0, 1fr) 302px;
    column-gap: 4px;
    min-height: 514px;
}
.strip{
    display: flex;
    justify-content: flex-end;
    align-items: center;
    height: 10px;
    padding-right: 3px;
    background: #ececee;
}
.strip button{
    line-height: 10px;
    color: #888;
}
h3{
    height: 19px;
    padding: 2px 7px;
    background: #f2f2f3;
    color: #666;
}
.sidenav{
    margin-bottom: 2px;
    border: 1px solid #e6e6ea;
    border-top: 0;
}
.navtools{
    display: flex;
    gap: 5px;
    height: 22px;
    margin-bottom: 4px;
    padding-left: 5px;
    border-bottom: 1px solid #e8e8ea;
}
.sidenav h4{
    height: 21px;
    margin-bottom: 2px;
    padding: 3px 2px;
    background: #eeeef0;
}
.sidenav ul{
    display: grid;
    grid-auto-rows: 1fr;
    height: 187px;
}
.sidenav a{
    display: flex;
    align-items: center;
    gap: 11px;
    height: 100%;
    padding-left: 13px;
}
.sidenav a svg{
    width: 16px;
    height: 16px;
}
.sidenav li.selected{
    background: #d6e7fb;
}

.middle{
    display: flex;
    flex-direction: column;
    gap: 4px;
}
.drawings{
    display: flex;
    flex-direction: column;
    height: 226px;
    border: 1px solid #e6e6ea;
    border-top: 0;
}
.tabs{
    display: flex;
    height: 19px;
    background: #f1f1f3;
}
.tabs button{
    padding: 0 6px;
    color: #888;
    background: #e8e8ea;
}
.tabs .dark{
    background: #d8d8da;
    padding: 0 8px;
}
.tabs .selected{
    padding: 0 7px;
    background: #f9f9fa;
    color: #222;
    font-weight: bold;
}
.bar{
    display: flex;
    align-items: center;
    gap: 5px;
    height: 23px;
    padding-left: 3px;
}
.bar button{
    gap: 3px;
}
.bar .caret::after{
    margin-left: 2px;
}
.bar .more{
    margin: 0 3px 0 auto;
}
table{
    border-collapse: collapse;
    table-layout: fixed;
}
th{
    height: 18px;
    font-weight: normal;
}
td, th{
    border: 1px solid #e9e9ee;
    border-width: 0 1px 1px 0;
    white-space: nowrap;
    overflow: hidden;
}
.sheets{
    width: 265px;
    height: 124px;
}
.sheets .c1{ width: 105px; }
.sheets .c2{ width: 51px; }
.sheets .c3{ width: 51px; }
.sheets th.selected{
    background: #7db8f7;
    color: #fff;
    font-weight: bold;
}
.sheets th:last-child{
    padding-left: 10px;
}
.sheets td{
    padding-left: 3px;
}
.sheets td:first-child{
    padding-left: 25px;
}
.sheets .root td:first-child{
    padding-left: 2px;
}
tr.selected td{
    background: #d5e7fb;
}
tr.selected td:first-child{
    outline: 1px solid #6b7a8c;
    outline-offset: -1px;
}
.fold{
    display: inline-flex;
    justify-content: center;
    width: 11px;
    height: 11px;
    margin-right: 5px;
    border: 1px solid #999;
    vertical-align: middle;
    line-height: 9px;
}
.hscroll{
    display: flex;
    align-items: center;
    gap: 4px;
    margin-top: auto;
    padding: 0 2px 3px 4px;
}
.hscroll span{
    width: 194px;
    height: 7px;
    border-radius: 4px;
    background: #cacaca;
}
.hscroll i{
    border: 3px solid transparent;
    border-right: 4px solid #444;
    border-left: 0;
}
.hscroll i:last-child{
    margin-left: auto;
    border-right: 0;
    border-left: 4px solid #444;
}
.props{
    flex: 1;
    display: flex;
    flex-direction: column;
    align-items: stretch;
}
.proplist{
    display: flex;
    justify-content: space-between;
    flex: 1;
    border: 1px solid #e6e6ea;
    border-top: 0;
}
.proplist table{
    width: 254px;
    height: 228px;
}
.proplist .c1{ width: 18px; }
.proplist .c2{ width: 96px; }
.proplist .c3{ width: 106px; }
.proplist td{
    padding-left: 2px;
}
.proplist td:first-child{
    padding: 0;
    text-align: center;
}
.proplist td:last-child{
    padding: 0;
    text-align: center;
}
.key td:nth-child(2){
    color: #2f62e0;
}
input[type=checkbox]{
    appearance: none;
    position: relative;
    display: inline-block;
    width: 12px;
    height: 12px;
    border: 1px solid #999;
    border-radius: 1px;
    vertical-align: middle;
}
input[type=checkbox]:checked::after{
    content: "";
    position: absolute;
    left: 3px;
    top: 1px;
    width: 4px;
    height: 6px;
    border: solid #888;
    border-width: 0 1px 1px 0;
    transform: rotate(45deg);
}
.proplist input:checked{
    background: #1c74d8;
    border-color: #1c74d8;
}
.proplist input:checked::after{
    border-color: #fff;
    border-width: 0 2px 2px 0;
}
.vscroll{
    width: 10px;
}
.vscroll span{
    display: block;
    width: 7px;
    height: 100px;
    margin-top: 44px;
    border-radius: 4px;
    background: #cfcfd1;
}
.extract{
    justify-content: center;
    width: 66px;
    height: 21px;
    margin: 2px 0 2px 8px;
    border: 1px solid #dcdce0;
}

/* 绘图区 */
.canvas{
    position: relative;
    display: flex;
    flex-direction: column;
    margin-left: -1px;
    background: #000;
}
.cad{
    flex: 1;
    width: 100%;
    min-height: 0;
}
.wall{ fill: #808080; stroke: none; }
.dark{ fill: #303030; stroke: none; }
.thin{ stroke: #8a8a8a; stroke-width: 1; }
.dash{ stroke: #555; }
.grid{ stroke: #4a4a4a; }
.axis{ stroke: #a0a0a0; }
.white{ stroke: #e8e8e8; }
.pipe{ stroke: #ffff10; }
.red{ stroke: #e07010; }
.olive{ stroke: #a09010; stroke-dasharray: 4 2; }
.pink{ stroke: #b07088; }
.sq{ stroke: #209060; fill: #0c4030; }
.green{ stroke: #10e010; stroke-width: 3; }
.green1{ stroke: #128030; }
.gdot{ fill: #10e010; stroke: none; }
.gold{ stroke: #a88a10; stroke-width: 2; }
.teal{ stroke: #3f9090; stroke-width: 3; }
.cross{ stroke: #fff; stroke-width: 4; }
.cad text{
    stroke: none;
    fill: #f2f2f2;
}
.cad .tiny{ font-size: 4px; font-weight: bold; }
.cad .mid text, .cad .num text{ text-anchor: middle; }
.cad .num{ font-size: 7px; }
.cad .dim{ font-size: 4px; }
.cad .dim text{ fill: #999; }
.cad .mark{ font-size: 14px; }
.cad .axy{ font-size: 12px; }
.cad .axy.x{ fill: #f00; }
.cad .axy.y{ fill: #1eff1e; }
.cad .caption{ font-size: 7px; }
.cad .scale{ font-size: 7px; }
.hint{
    display: flex;
    align-items: center;
    justify-content: center;
    gap: 2px;
    height: 23px;
    background: #2b2b2b;
    color: #fff;
    font-weight: bold;
}
.hint svg{
    stroke: #ddd;
}
.viewbar{
    position: absolute;
    top: 0;
    right: 0;
    display: flex;
    flex-direction: column;
    align-items: center;
    gap: 4px;
    width: 27px;
    height: 188px;
    padding-top: 9px;
    background: #fdfdfe;
}
.viewbar button{
    position: relative;
    flex-direction: column;
}
.viewbar svg{
    width: 20px;
    height: 20px;
}
.viewbar .drop::after{
    content: "";
    margin: 4px 0 1px;
    border: 3px solid transparent;
    border-top: 3px solid #555;
    border-bottom: 0;
}
.viewbar hr{
    width: 18px;
    border: 0;
    border-top: 1px solid #aaa;
}
.d3 span{
    position: absolute;
    left: 4px;
    top: 7px;
    font-size: 7px;
    line-height: 10px;
    font-weight: bold;
    color: #3f82d8;
}

/* 显示设置 */
.display{
    position: relative;
    display: flex;
    flex-direction: column;
    margin-bottom: 2px;
    border-bottom: 1px solid #d0d0d4;
}
.display .tabs{
    align-items: flex-end;
    gap: 4px;
    height: 21px;
    padding-left: 3px;
    background: none;
}
.display .tabs button{
    height: 18px;
    padding: 0 5px;
    background: #dededf;
    color: #666;
}
.display .tabs .selected{
    background: #fff;
    border: 1px solid #e0e0e4;
    border-bottom: 0;
    color: #3f90e0;
    font-weight: normal;
}
.radios{
    display: flex;
    align-items: center;
    height: 25px;
    padding-left: 5px;
    border: 1px solid #dcdce0;
    color: #222;
}
.radios label{
    display: flex;
    align-items: center;
    gap: 5px;
    width: 74px;
}
.radios label:last-child{
    width: auto;
}
.radios input{
    appearance: none;
    width: 12px;
    height: 12px;
    border: 1px solid #999;
    border-radius: 50%;
    flex: none;
}
.radios input:checked{
    border-color: #3f82d8;
    background: radial-gradient(#2b78d8 2px, #fff 3px);
}
.tree{
    flex: 1;
    margin-bottom: 5px;
    padding-top: 3px;
    border: 1px solid #d4d4d8;
    border-top: 0;
    color: #8c8c8c;
}
.tree label{
    display: flex;
    align-items: center;
    gap: 5px;
    height: 20px;
    padding-left: 37px;
}
.tree .top{
    padding-left: 11px;
}
.tree .top::before{
    content: "";
    border: 3px solid transparent;
    border-top: 4px solid #777;
    border-bottom: 0;
    margin-left: -2px;
}
.tree input{
    border-color: #aaa;
    background: #f4f4f4;
}
.thumb{
    position: absolute;
    right: 3px;
    bottom: -15px;
    width: 6px;
    height: 49px;
    border-radius: 3px;
    background: linear-gradient(#b0b0b0 28px, #2fcf6a 29px);
}

/* 状态栏 */
footer{
    display: grid;
    grid-template-columns: 399px 1fr;
    height: 25px;
    background: #fbfbfe;
}
.info{
    display: grid;
    grid-template-columns: 100px 116px 92px 1fr;
    align-items: center;
    padding-left: 2px;
}
.status{
    display: flex;
    align-items: center;
    gap: 3px;
    padding-left: 2px;
}
.status button{
    justify-content: center;
    width: 20px;
    height: 20px;
    border: 1px solid #c4c4ca;
    border-radius: 2px;
}
.status button.caret{
    width: 30px;
}
.status button.caret::after{
    margin-left: 4px;
}
.status .on{
    background: #d0e4fb;
    border-color: #8ab4e8;
}
.dim-ic svg{
    stroke: #999;
}
.status span{
    margin: 0 4px 0 2px;
}
.bright{
    display: flex;
    align-items: center;
}
.bright input{
    appearance: none;
    width: 38px;
    height: 14px;
    background: linear-gradient(#bbb, #bbb) center / 100% 1px no-repeat;
}
.bright input::-webkit-slider-thumb{
    appearance: none;
    width: 7px;
    height: 14px;
    border: 1px solid #777;
    border-radius: 2px;
    background: #eee;
}
.bottom{
    height: 40px;
    background: #fffcdc;
}
```
